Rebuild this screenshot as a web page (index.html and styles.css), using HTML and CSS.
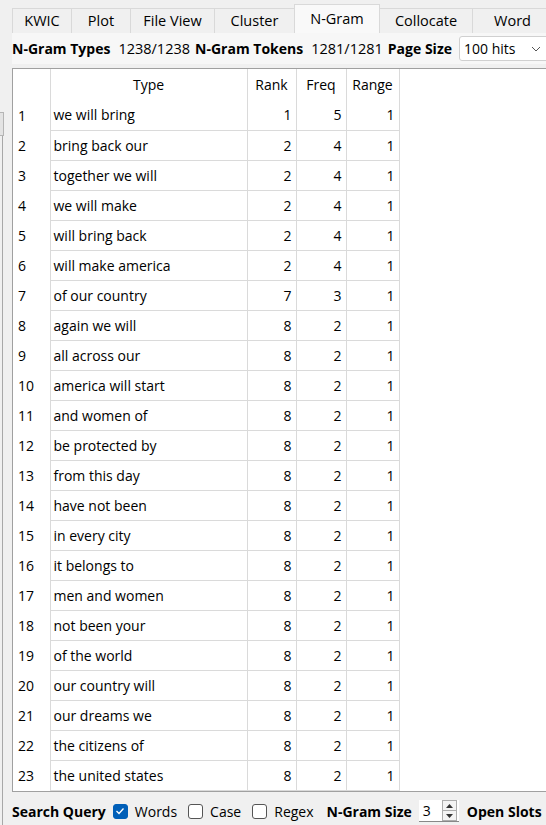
FILE: index.html
```html
<!DOCTYPE html>
<html>
<head>
<meta charset="utf-8">
<link rel="stylesheet" href="styles.css">
</head>
<body>
<div class="app">
  <div class="leftstrip">
    <div class="strip-gap"></div>
    <div class="strip-box"></div>
    <div class="strip-line"></div>
  </div>
  <div class="main">
    <div class="tabs">
      <div class="tab t-kwic">KWIC</div>
      <div class="tab t-plot">Plot</div>
      <div class="tab t-file">File View</div>
      <div class="tab t-cluster">Cluster</div>
      <div class="tab t-ngram active">N-Gram</div>
      <div class="tab t-coll">Collocate</div>
      <div class="tab t-word">Word</div>
    </div>
    <div class="info">
      <span class="lbl">N-Gram Types</span><span class="val">1238/1238</span>
      <span class="lbl">N-Gram Tokens</span><span class="val">1281/1281</span>
      <span class="lbl">Page Size</span>
      <div class="combo"><span>100 hits</span>
        <svg class="chev" width="10" height="6" viewBox="0 0 10 6"><path d="M1 1 L5 5 L9 1" fill="none" stroke="#555" stroke-width="1"/></svg>
      </div>
    </div>
    <div class="frame">
      <table class="grid">
        <colgroup>
          <col class="c-num"><col class="c-type"><col class="c-rank"><col class="c-freq"><col class="c-range">
        </colgroup>
        <thead>
          <tr><th class="num"></th><th>Type</th><th>Rank</th><th>Freq</th><th>Range</th></tr>
        </thead>
        <tbody>
          <tr><td class="num">1</td><td class="type">we will bring</td><td class="n">1</td><td class="n">5</td><td class="n">1</td></tr>
          <tr><td class="num">2</td><td class="type">bring back our</td><td class="n">2</td><td class="n">4</td><td class="n">1</td></tr>
          <tr><td class="num">3</td><td class="type">together we will</td><td class="n">2</td><td class="n">4</td><td class="n">1</td></tr>
          <tr><td class="num">4</td><td class="type">we will make</td><td class="n">2</td><td class="n">4</td><td class="n">1</td></tr>
          <tr><td class="num">5</td><td class="type">will bring back</td><td class="n">2</td><td class="n">4</td><td class="n">1</td></tr>
          <tr><td class="num">6</td><td class="type">will make america</td><td class="n">2</td><td class="n">4</td><td class="n">1</td></tr>
          <tr><td class="num">7</td><td class="type">of our country</td><td class="n">7</td><td class="n">3</td><td class="n">1</td></tr>
          <tr><td class="num">8</td><td class="type">again we will</td><td class="n">8</td><td class="n">2</td><td class="n">1</td></tr>
          <tr><td class="num">9</td><td class="type">all across our</td><td class="n">8</td><td class="n">2</td><td class="n">1</td></tr>
          <tr><td class="num">10</td><td class="type">america will start</td><td class="n">8</td><td class="n">2</td><td class="n">1</td></tr>
          <tr><td class="num">11</td><td class="type">and women of</td><td class="n">8</td><td class="n">2</td><td class="n">1</td></tr>
          <tr><td class="num">12</td><td class="type">be protected by</td><td class="n">8</td><td class="n">2</td><td class="n">1</td></tr>
          <tr><td class="num">13</td><td class="type">from this day</td><td class="n">8</td><td class="n">2</td><td class="n">1</td></tr>
          <tr><td class="num">14</td><td class="type">have not been</td><td class="n">8</td><td class="n">2</td><td class="n">1</td></tr>
          <tr><td class="num">15</td><td class="type">in every city</td><td class="n">8</td><td class="n">2</td><td class="n">1</td></tr>
          <tr><td class="num">16</td><td class="type">it belongs to</td><td class="n">8</td><td class="n">2</td><td class="n">1</td></tr>
          <tr><td class="num">17</td><td class="type">men and women</td><td class="n">8</td><td class="n">2</td><td class="n">1</td></tr>
          <tr><td class="num">18</td><td class="type">not been your</td><td class="n">8</td><td class="n">2</td><td class="n">1</td></tr>
          <tr><td class="num">19</td><td class="type">of the world</td><td class="n">8</td><td class="n">2</td><td class="n">1</td></tr>
          <tr><td class="num">20</td><td class="type">our country will</td><td class="n">8</td><td class="n">2</td><td class="n">1</td></tr>
          <tr><td class="num">21</td><td class="type">our dreams we</td><td class="n">8</td><td class="n">2</td><td class="n">1</td></tr>
          <tr><td class="num">22</td><td class="type">the citizens of</td><td class="n">8</td><td class="n">2</td><td class="n">1</td></tr>
          <tr><td class="num">23</td><td class="type">the united states</td><td class="n">8</td><td class="n">2</td><td class="n">1</td></tr>
        </tbody>
      </table>
    </div>
    <div class="bottom">
      <span class="lbl">Search Query</span>
      <span class="cb checked"><svg width="10" height="8" viewBox="0 0 10 8"><path d="M1.5 4 L4 6.5 L8.5 1.5" fill="none" stroke="#fff" stroke-width="1.3"/></svg></span><span class="cbl">Words</span>
      <span class="cb"></span><span class="cbl">Case</span>
      <span class="cb"></span><span class="cbl">Regex</span>
      <span class="lbl">N-Gram Size</span>
      <div class="spin"><span class="spin-val">3</span>
        <div class="spin-btns">
          <div class="sb"><svg width="7" height="4" viewBox="0 0 7 4"><path d="M0 4 L3.5 0 L7 4Z" fill="#333"/></svg></div>
          <div class="sb"><svg width="7" height="4" viewBox="0 0 7 4"><path d="M0 0 L3.5 4 L7 0Z" fill="#333"/></svg></div>
        </div>
      </div>
      <span class="lbl">Open Slots</span>
    </div>
  </div>
</div>
</body>
</html>
```
FILE: styles.css
```css
html, body {
  margin: 0;
  padding: 0;
  background: #f0f0f0;
  overflow: hidden;
  width: 546px;
  height: 825px;
}
body {
  font-family: "Open Sans", "Noto Sans", "Liberation Sans", sans-serif;
  font-size: 14px;
  color: #000;
}
.app {
  display: flex;
  width: 600px;
  height: 825px;
}
.leftstrip {
  width: 12px;
  flex: none;
  display: flex;
  flex-direction: column;
}
.strip-gap { height: 112px; }
.strip-box {
  width: 3px;
  height: 22px;
  background: #e3e3e3;
  border-top: 1px solid #b5b5b5;
  border-right: 1px solid #b5b5b5;
  border-bottom: 1px solid #b5b5b5;
}
.strip-line {
  flex: 1;
  width: 2px;
  border-right: 1px solid #a8a8a8;
}
.main {
  flex: 1;
  display: flex;
  flex-direction: column;
}
.tabs {
  display: flex;
  height: 33px;
  align-items: flex-end;
}
.tab {
  height: 25px;
  line-height: 24px;
  text-align: center;
  border: 1px solid #d9d9d9;
  border-bottom: none;
  border-left: none;
  background: #f0f0f0;
  box-sizing: border-box;
  font-size: 14.5px;
}
.tab.t-kwic { border-left: 1px solid #d9d9d9; width: 60px; }
.t-plot { width: 59px; }
.t-file { width: 84px; }
.t-cluster { width: 80px; }
.t-ngram { width: 85px; }
.t-coll { width: 93px; }
.t-word { width: 80px; }
.tab.active {
  height: 29px;
  line-height: 28px;
  background: #f9f9f9;
  border-left: 1px solid #d9d9d9;
  margin-left: -1px;
  width: 86px;
  padding-bottom: 4px;
}
.info {
  height: 31px;
  display: flex;
  align-items: center;
  white-space: nowrap;
  background: #f7f7f7;
}
.lbl {
  font-weight: 700;
  font-size: 14px;
}
.val {
  margin-left: 8px;
  margin-right: 5px;
  font-size: 14.5px;
}
.combo {
  margin-left: 7px;
  width: 90px;
  height: 25px;
  box-sizing: border-box;
  background: #fff;
  border: 1px solid #d0d0d0;
  border-radius: 3px;
  display: flex;
  align-items: center;
  padding-left: 4px;
  flex: none;
}
.combo .chev { margin-left: 16px; }
.frame {
  margin-top: 4px;
  height: 724px;
  background: #fff;
  border: 1px solid #a0a0a0;
  box-sizing: border-box;
  border-right: none;
}
.grid {
  border-collapse: collapse;
  table-layout: fixed;
  width: 386px;
}
.c-num { width: 37px; }
.c-type { width: 197px; }
.c-rank { width: 49px; }
.c-freq { width: 50px; }
.c-range { width: 53px; }
.grid th {
  height: 31px;
  font-weight: 400;
  text-align: center;
  padding: 0;
  border-left: 1px solid #dadada;
  border-right: 1px solid #dadada;
  box-sizing: border-box;
}
.grid th.num { border-left: none; }
.grid td {
  height: 30px;
  padding: 0 4px;
  border: 1px solid #dadada;
  border-top: none;
  box-sizing: border-box;
  white-space: nowrap;
  overflow: hidden;
}
.grid td.num {
  border: none;
  border-right: 1px solid #dadada;
  padding-left: 5px;
}
.grid td.type { padding-left: 3px; }
.grid td.n { text-align: right; }
.bottom {
  height: 33px;
  padding-top: 5px;
  box-sizing: border-box;
  display: flex;
  align-items: center;
  white-space: nowrap;
}
.cb {
  width: 15px;
  height: 15px;
  box-sizing: border-box;
  border: 1px solid #555;
  border-radius: 3px;
  background: #fff;
  margin-left: 7px;
  display: inline-flex;
  align-items: center;
  justify-content: center;
  flex: none;
}
.cb.checked {
  background: #005fb8;
  border-color: #005fb8;
}
.cbl { margin-left: 7px; }
.cbl + .cb { margin-left: 11px; }
.cbl + .lbl { margin-left: 13px; }
.spin {
  margin-left: 7px;
  margin-right: 8px;
  width: 40px;
  height: 22px;
  background: #fff;
  border-bottom: 1px solid #888;
  display: flex;
  align-items: center;
  justify-content: space-between;
  box-sizing: border-box;
  flex: none;
}
.spin-val { margin-left: 4px; }
.spin-btns {
  width: 15px;
  height: 21px;
  display: flex;
  flex-direction: column;
  margin-right: 2px;
}
.sb {
  flex: 1;
  border: 1px solid #adadad;
  background: #f4f4f4;
  display: flex;
  align-items: center;
  justify-content: center;
}
.sb + .sb { border-top: none; }
```
